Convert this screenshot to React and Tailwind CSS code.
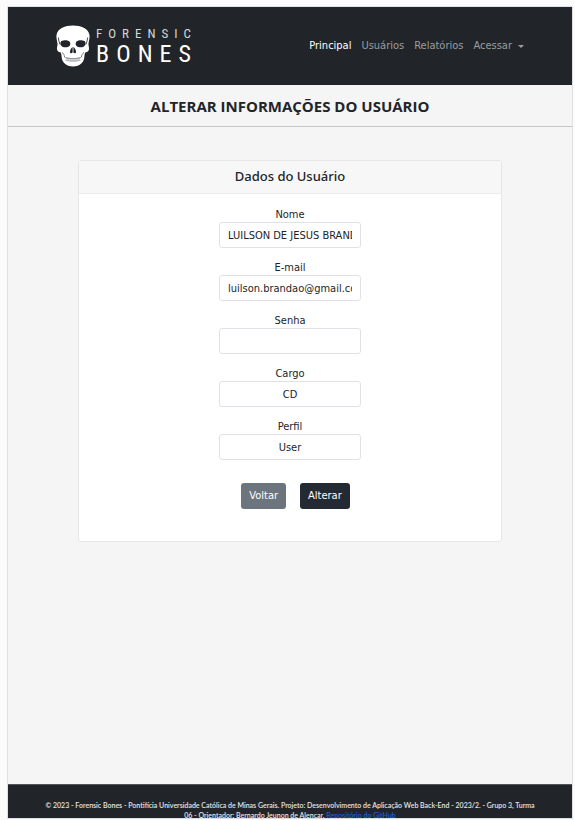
function Skull() {
  return (
    <svg viewBox="0 0 34 42" className="h-[42px] w-[34px] shrink-0" aria-hidden="true">
      <path
        fill="#fff"
        d="M17 .5C9 .5 1.800 3.500.6 9.500c-.6 3 .4 6 1 9.500-.1 1.700-.8 3.500-.6 5.200.3 1.900 1.600 2.800 3.600 3.300.6.4.8 2 1 4 .2 2.700.9 5 3.100 7 1.900 2 4.800 2.900 8.300 2.900s6.400-.9 8.300-2.900c2.200-2 2.900-4.300 3.100-7 .2-2 .4-3.600 1-4 2-.5 3.300-1.400 3.600-3.300.2-1.700-.5-3.500-.6-5.200.6-3.500 1.600-6.500 1-9.500C32.200 3.500 25 .5 17 .5Z"
      />
      <g fill="#212529">
        <path d="M5.600 16c2.200-1 6-.8 7.900.5 1 1 1.100 3.200.2 4.300-1.600 1.600-5 2-7.200 1-2.300-1.100-2.800-4.600-.9-5.800Z" />
        <path d="M28.400 16c-2.200-1-6-.8-7.900.5-1 1-1.100 3.200-.2 4.300 1.600 1.600 5 2 7.200 1 2.300-1.100 2.800-4.600.9-5.800Z" />
        <path d="M16.600 22c-1.600 1.200-2.800 3.500-2.600 5.200.3 1.500 2 1.200 2.600.3Z" />
        <path d="M17.400 22c1.600 1.200 2.800 3.500 2.600 5.200-.3 1.500-2 1.200-2.600.3Z" />
      </g>
      <g fill="none" stroke="#212529" strokeWidth=".8">
        <path d="M2.300 12.500c.2 2.500.9 4.500 1.700 7M31.700 12.500c-.2 2.500-.9 4.500-1.700 7" />
        <path d="M6 27.500c1.500.8 2.200 2.500 2.700 4.700M28 27.500c-1.500.8-2.200 2.500-2.700 4.700" strokeWidth=".6" />
        <path d="M8.700 32.200c2.500 1.200 5.300 1.400 8.300 1.400s5.800-.2 8.300-1.400" strokeWidth=".4" />
        <path d="M9.500 35c2.500 1 5 1.200 7.500 1.200s5-.2 7.500-1.200" strokeWidth=".4" />
        <path d="M11 32v3M13 32.500v3M15 33v3M17 33v3M19 33v3M21 32.500v3M23 32v3" strokeWidth=".4" />
      </g>
    </svg>
  );
}

function Letters({ text, className }) {
  return (
    <span className={`flex justify-between ${className}`}>
      {text.split("").map((letter, i) => (
        <span key={i}>{letter}</span>
      ))}
    </span>
  );
}

const fields = [
  { id: "nome", label: "Nome", type: "text", value: "LUILSON DE JESUS BRANDAO" },
  { id: "email", label: "E-mail", type: "email", value: "luilson.brandao@gmail.com" },
  { id: "senha", label: "Senha", type: "password", value: "" },
  { id: "cargo", label: "Cargo", type: "text", value: "CD" },
  { id: "perfil", label: "Perfil", type: "text", value: "User" },
];

export default function App() {
  return (
    <div className="flex h-screen flex-col bg-[#fbfbfb] pt-[6px] pr-[2px] pb-[1px] pl-[7px] font-['DejaVu_Sans_Condensed','Open_Sans',sans-serif] text-[11px] leading-4 text-[#212529]">
      <div className="flex min-h-0 flex-1 flex-col border border-[#dee0e3] bg-[#f5f5f5]">
        <header className="flex h-[78px] shrink-0 items-center justify-between bg-[#212529] px-12">
          <a href="#" className="flex items-center gap-[6px] text-white">
            <Skull />
            <span className="flex w-[95px] flex-col font-['Roboto_Condensed','Roboto',sans-serif]">
              <Letters text="FORENSIC" className="text-[13px] leading-4 text-[#d5d6d7]" />
              <Letters text="BONES" className="text-[24px] leading-6" />
            </span>
          </a>
          <nav className="flex items-center gap-[10px] text-[#9b9d9f]">
            <a href="#" className="text-white">Principal</a>
            <a href="#">Usuários</a>
            <a href="#">Relatórios</a>
            <a href="#" className="flex items-center gap-[6px]">
              Acessar
              <span className="border-x-[3px] border-t-[3px] border-x-transparent border-t-[#9b9d9f]" />
            </a>
          </nav>
        </header>

        <h1 className="h-[42px] shrink-0 border-b border-[#c5c5c6] text-center font-['Open_Sans',sans-serif] text-[15px] leading-[42px] font-bold">
          ALTERAR INFORMAÇÕES DO USUÁRIO
        </h1>

        <main className="flex-1 px-[70px] pt-[33px]">
          <section className="rounded-[3px] border border-[#e6e6e7] bg-white">
            <h2 className="border-b border-[#ebebeb] bg-[#f7f7f7] pt-[5px] pb-[7px] text-center font-['Noto_Sans',sans-serif] text-[13px] leading-5 font-medium">
              Dados do Usuário
            </h2>
            <form className="flex flex-col items-center pt-[14px] pb-[32px]">
              {fields.map((f) => (
                <div key={f.id} className="mb-[13px] flex w-[142px] flex-col">
                  <label htmlFor={f.id} className="text-center leading-[14px]">{f.label}</label>
                  <input
                    id={f.id}
                    type={f.type}
                    defaultValue={f.value}
                    className="h-[26px] w-full rounded-[3px] border border-[#dee2e6] bg-white px-2 text-center"
                  />
                </div>
              ))}
              <div className="mt-[10px] flex gap-[14px] pl-[11px] text-white">
                <button type="button" className="h-[26px] rounded-[3px] bg-[#6c757d] px-[8px]">Voltar</button>
                <button type="submit" className="h-[26px] rounded-[3px] bg-[#242a33] px-[8px]">Alterar</button>
              </div>
            </form>
          </section>
        </main>

        <footer className="h-[34px] shrink-0 overflow-hidden border-t border-[#50555a] bg-[#212529] px-9 pt-[15px] text-center font-['Lato',sans-serif] text-[7px] leading-[10px] font-semibold text-[#e4e4e5]">
          © 2023 - Forensic Bones - Pontifícia Universidade Católica de Minas Gerais. Projeto: Desenvolvimento de Aplicação Web Back-End - 2023/2. - Grupo 3, Turma 06 - Orientador: Bernardo Jeunon de Alencar.{" "}
          <a href="#" className="text-[#1f62c8]">Repositório do GitHub</a>
        </footer>
      </div>
    </div>
  );
}
